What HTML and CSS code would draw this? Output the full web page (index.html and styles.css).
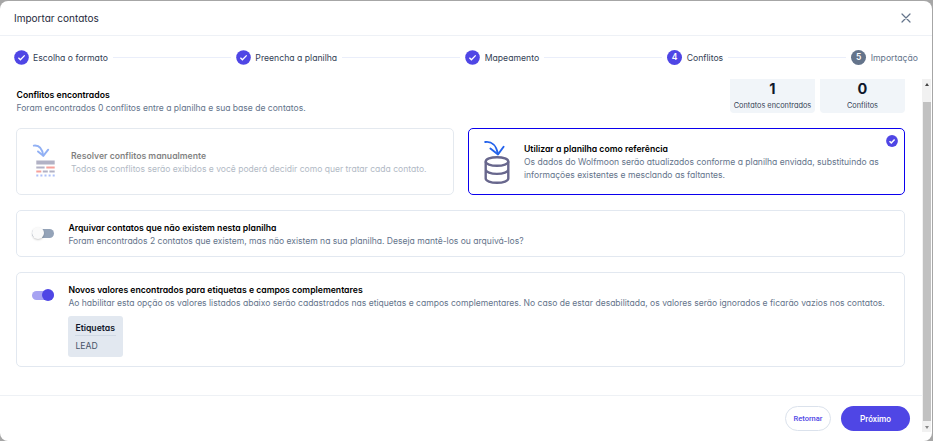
FILE: index.html
```html
<!DOCTYPE html>
<html lang="pt-BR">
<head>
<meta charset="utf-8">
<title>Importar contatos</title>
<link rel="stylesheet" href="styles.css">
</head>
<body>
<div class="dialog">
  <header class="header">
    <h1>Importar contatos</h1>
    <svg class="close" viewBox="0 0 10 10"><path d="M1 1l8 8M9 1L1 9"/></svg>
  </header>
  <nav class="stepper">
    <div class="step"><svg class="dot" viewBox="0 0 15 15"><circle cx="7.5" cy="7.5" r="7.3"/><path d="M4.4 7.8l2 2 4.3-4.4"/></svg><span>Escolha o formato</span></div>
    <i class="line"></i>
    <div class="step"><svg class="dot" viewBox="0 0 15 15"><circle cx="7.5" cy="7.5" r="7.3"/><path d="M4.4 7.8l2 2 4.3-4.4"/></svg><span>Preencha a planilha</span></div>
    <i class="line"></i>
    <div class="step"><svg class="dot" viewBox="0 0 15 15"><circle cx="7.5" cy="7.5" r="7.3"/><path d="M4.4 7.8l2 2 4.3-4.4"/></svg><span>Mapeamento</span></div>
    <i class="line"></i>
    <div class="step"><b class="num">4</b><span>Conflitos</span></div>
    <i class="line"></i>
    <div class="step pending"><b class="num">5</b><span>Importação</span></div>
  </nav>
  <div class="main">
    <div class="column">
      <section class="content">
        <div class="summary">
          <div class="intro">
            <h2>Conflitos encontrados</h2>
            <p>Foram encontrados 0 conflitos entre a planilha e sua base de contatos.</p>
          </div>
          <div class="stats">
            <div class="stat"><strong>1</strong><span>Contatos encontrados</span></div>
            <div class="stat"><strong>0</strong><span>Conflitos</span></div>
          </div>
        </div>
        <div class="choices">
          <div class="card choice disabled">
            <svg class="art" viewBox="0 0 28 46">
              <g class="arrow"><path d="M1.8 6.6C7 6 10.3 10 11.2 16.600"/><path d="M6 12.400l5.300 4.400 4.900-6.100"/></g>
              <path class="gray" d="M4.300 21.500h18.400v4H4.300zM4.300 27.500h8.300v1.900H4.300zM10.800 31.500h5v1.900h-5zM17.400 31.500h5.300v1.900h-5.300z"/>
              <path class="red" d="M14.300 27.500h8.400v1.900h-8.400zM4.300 31.500h5v1.900h-5z"/>
              <path class="blue" d="M4.300 35.400h2v2h-2zM8.400 35.400h2v2h-2zM12.500 35.400h2v2h-2zM16.600 35.400h2v2h-2zM20.700 35.400h2v2h-2z"/>
            </svg>
            <div class="copy"><h3>Resolver conflitos manualmente</h3><p>Todos os conflitos serão exibidos e você poderá decidir como quer tratar cada contato.</p></div>
          </div>
          <div class="card choice selected">
            <svg class="art" viewBox="0 0 28 46">
              <g class="arrow"><path d="M2.200 3C9 2 13.500 7 14.900 15"/><path d="M7.400 9.500l7.600 5.900 5.600-7.700"/></g>
              <g class="db"><ellipse cx="14" cy="22.500" rx="11.300" ry="4.300"/><path d="M2.700 22.500v17c0 2.400 5 4.300 11.300 4.300s11.300-1.900 11.300-4.300v-17M2.700 30.600c0 2.400 5 4.300 11.300 4.300s11.300-1.900 11.300-4.300"/></g>
            </svg>
            <div class="copy"><h3>Utilizar a planilha como referência</h3><p>Os dados do Wolfmoon serão atualizados conforme a planilha enviada, substituindo as<br>informações existentes e mesclando as faltantes.</p></div>
            <svg class="badge" viewBox="0 0 12 12"><circle cx="6" cy="6" r="5.900"/><path d="M3.500 6.200l1.800 1.700 3.300-3.500"/></svg>
          </div>
        </div>
        <div class="card option">
          <span class="switch"></span>
          <div><h3>Arquivar contatos que não existem nesta planilha</h3><p>Foram encontrados 2 contatos que existem, mas não existem na sua planilha. Deseja mantê-los ou arquivá-los?</p></div>
        </div>
        <div class="card option tall">
          <span class="switch on"></span>
          <div><h3>Novos valores encontrados para etiquetas e campos complementares</h3><p>Ao habilitar esta opção os valores listados abaixo serão cadastrados nas etiquetas e campos complementares. No caso de estar desabilitada, os valores serão ignorados e ficarão vazios nos contatos.</p>
            <div class="tags"><h4>Etiquetas</h4><span>LEAD</span></div>
          </div>
        </div>
      </section>
      <footer class="footer"><button class="back">Retornar</button><button class="next">Próximo</button></footer>
    </div>
    <div class="scrollbar"><i class="up"></i><i class="thumb"></i><i class="down"></i></div>
  </div>
</div>
</body>
</html>
```
FILE: styles.css
```css
* { box-sizing: border-box; margin: 0; padding: 0; }
body { width: 933px; height: 441px; overflow: hidden; background: #a6a6a6; padding: 1px 1px 0 0; font-family: Inter, "Noto Sans", sans-serif; font-feature-settings: "cv11" 1; font-size: 8.67px; color: #334155; }
.dialog { height: 440px; background: #fff; border-radius: 8px; overflow: hidden; display: flex; flex-direction: column; }
.header { height: 35px; flex: none; border-bottom: 1px solid #eef1f6; display: flex; align-items: center; justify-content: space-between; padding: 0 21px 0 14px; }
h1 { font-size: 10px; line-height: 14px; font-weight: 400; color: #1e293b; }
.close { width: 10px; height: 10px; fill: none; stroke: #64748b; stroke-width: 1.2; stroke-linecap: round; }
.stepper { height: 43px; flex: none; display: flex; align-items: center; padding: 0 14px 0 13.5px; }
.step { display: flex; align-items: center; gap: 4.5px; line-height: 12px; white-space: nowrap; }
.pending { color: #64748b; }
.dot, .num { width: 15px; height: 15px; flex: none; }
.dot circle, .badge circle { fill: #4f46e5; }
.dot path, .badge path { fill: none; stroke: #fff; stroke-width: 1.3; }
.num { border-radius: 50%; background: #4f46e5; color: #fff; font-size: 8.5px; line-height: 15px; text-align: center; font-weight: 600; }
.pending .num { background: #64748b; }
.line { flex: 1; height: 1px; background: #eaeefa; margin: 0 5px; }
.main { flex: 1; min-height: 0; display: flex; }
.column { width: 922px; display: flex; flex-direction: column; }
.content { height: 316px; padding: 0 17px 0 16px; overflow: hidden; }
.summary { display: flex; justify-content: space-between; height: 49px; }
.intro { padding: 10px 0 0 .5px; }
h2, h3 { font-size: 8.67px; font-weight: 600; line-height: 13px; color: #000; white-space: nowrap; }
p { font-size: 8.555px; line-height: 13px; color: #64748b; white-space: nowrap; }
.stats { display: flex; gap: 5px; height: 34px; }
.stat { width: 85px; background: #f1f5f9; border-radius: 0 0 4px 4px; display: flex; flex-direction: column; align-items: center; white-space: nowrap; }
.stat strong { font-size: 14.5px; line-height: 20px; font-weight: 700; color: #0f172a; }
.stat span { font-size: 7.35px; line-height: 14px; }
.card { border: 1px solid #e2e8f0; border-radius: 5px; display: flex; }
.choices { display: grid; grid-template-columns: 1fr 1fr; gap: 14px; height: 67px; }
.choice { position: relative; align-items: center; padding-left: 15px; }
.copy { padding-top: 2px; }
.disabled { opacity: .5; border-color: #cbd5e1; gap: 11px; }
.selected { border-color: #0b00ee; padding-left: 14px; gap: 13.5px; }
.art { width: 28px; height: 46px; flex: none; }
.arrow { fill: none; stroke: #2563eb; stroke-width: 1.9; stroke-linecap: round; stroke-linejoin: round; }
.gray { fill: #68678d; }
.red { fill: #ef4438; }
.blue { fill: #5d83f5; }
.db { fill: none; stroke: #68678d; stroke-width: 2.4; }
.badge { position: absolute; right: 6px; top: 6px; width: 12px; height: 12px; }
.badge path { stroke-width: 1.5; }
.option { height: 47px; margin-top: 15px; padding: 11px 0 0 15px; gap: 14.4px; }
.option.tall { height: 95px; }
.switch { position: relative; width: 22px; height: 9px; margin-top: 7px; border-radius: 5px; background: #94a3b8; flex: none; }
.switch::after { content: ""; position: absolute; left: 0; top: -2px; width: 12px; height: 12px; border-radius: 50%; background: #fafafa; box-shadow: 0 1px 2px #0003; }
.switch.on { background: #a7a3f2; }
.switch.on::after { left: 10px; background: #4f46e5; box-shadow: none; }
.tags { width: 55px; height: 41px; margin-top: 6px; background: #e2e8f0; border-radius: 3px; padding: 5px 7px; }
.tags h4 { font-size: 8.67px; line-height: 14px; height: 15px; font-weight: 600; color: #0f172a; border-bottom: 1px solid #cfd8e3; }
.tags span { display: block; line-height: 12px; margin-top: 4px; color: #475569; }
.footer { flex: 1; border-top: 1px solid #eef1f5; display: flex; justify-content: flex-end; padding: 10px 12px 0 0; gap: 10px; }
button { height: 25px; border-radius: 13px; font: 500 7.5px Roboto, sans-serif; white-space: nowrap; }
.back { width: 46px; background: #fff; border: 1px solid #dbe2ec; color: #4f46e5; }
.next { width: 69px; background: #4f46e5; border: 0; color: #fff; font-size: 8.3px; }
.scrollbar { width: 9px; height: 353px; background: #f1f1f1; display: flex; flex-direction: column; align-items: center; }
.up, .down { width: 0; height: 0; border: 2px solid transparent; }
.up { border-bottom: 3px solid #444; margin: 2px 0 16px; }
.thumb { width: 8px; height: 319px; background: #c1c1c1; }
.down { border-top: 3px solid #888; margin-top: 5px; }
```
